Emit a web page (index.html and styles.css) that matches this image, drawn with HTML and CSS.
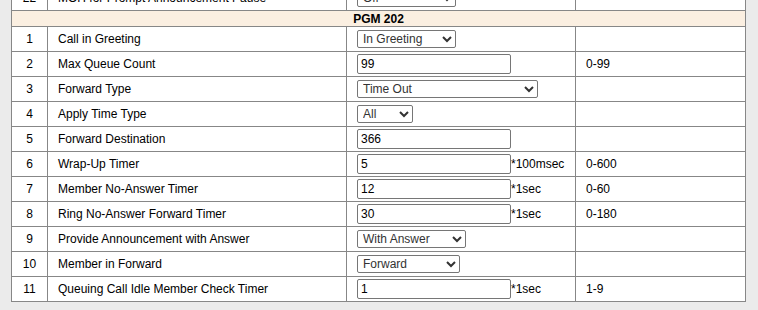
FILE: index.html
```html
<!DOCTYPE html>
<html lang="en">
<head>
  <meta charset="UTF-8">
  <title>PGM Settings</title>
  <link rel="stylesheet" href="styles.css">
</head>
<body>
  <div class="page">
    <table class="settings">
      <colgroup>
        <col class="col-no">
        <col class="col-name">
        <col class="col-value">
        <col class="col-range">
      </colgroup>
      <tr>
        <td class="no">22</td>
        <td>MOH for Prompt Announcement Pause</td>
        <td><select class="sel-off"><option>Off</option></select></td>
        <td></td>
      </tr>
      <tr class="group">
        <td colspan="4">PGM 202</td>
      </tr>
      <tr>
        <td class="no">1</td>
        <td>Call in Greeting</td>
        <td><select class="sel-greeting"><option>In Greeting</option></select></td>
        <td></td>
      </tr>
      <tr>
        <td class="no">2</td>
        <td>Max Queue Count</td>
        <td><input type="text" value="99"></td>
        <td>0-99</td>
      </tr>
      <tr>
        <td class="no">3</td>
        <td>Forward Type</td>
        <td><select class="sel-forward-type"><option>Time Out</option></select></td>
        <td></td>
      </tr>
      <tr>
        <td class="no">4</td>
        <td>Apply Time Type</td>
        <td><select class="sel-time"><option>All</option></select></td>
        <td></td>
      </tr>
      <tr>
        <td class="no">5</td>
        <td>Forward Destination</td>
        <td><input type="text" value="366"></td>
        <td></td>
      </tr>
      <tr>
        <td class="no">6</td>
        <td>Wrap-Up Timer</td>
        <td><input type="text" value="5">*100msec</td>
        <td>0-600</td>
      </tr>
      <tr>
        <td class="no">7</td>
        <td>Member No-Answer Timer</td>
        <td><input type="text" value="12">*1sec</td>
        <td>0-60</td>
      </tr>
      <tr>
        <td class="no">8</td>
        <td>Ring No-Answer Forward Timer</td>
        <td><input type="text" value="30">*1sec</td>
        <td>0-180</td>
      </tr>
      <tr>
        <td class="no">9</td>
        <td>Provide Announcement with Answer</td>
        <td><select class="sel-answer"><option>With Answer</option></select></td>
        <td></td>
      </tr>
      <tr>
        <td class="no">10</td>
        <td>Member in Forward</td>
        <td><select class="sel-member"><option>Forward</option></select></td>
        <td></td>
      </tr>
      <tr>
        <td class="no">11</td>
        <td>Queuing Call Idle Member Check Timer</td>
        <td><input type="text" value="1">*1sec</td>
        <td>1-9</td>
      </tr>
    </table>
  </div>
</body>
</html>
```

FILE: styles.css
```css
* {
  box-sizing: border-box;
}

body {
  margin: 0;
  background: #ebebeb;
  font-family: Arial, "Liberation Sans", sans-serif;
  font-size: 12px;
  color: #000;
}

.page {
  padding: 0 0 0 11px;
  margin-top: -15px;
}

.settings {
  border-collapse: collapse;
  table-layout: fixed;
  width: 734px;
  background: #fff;
  border: 1px solid #878787;
}

.col-no { width: 36px; }
.col-name { width: 299px; }
.col-value { width: 229px; }
.col-range { width: 170px; }

.settings td {
  border: 1px solid #878787;
  height: 25px;
  padding: 0 0 0 10px;
  vertical-align: middle;
  white-space: nowrap;
}

.settings td.no {
  text-align: center;
  padding: 0;
}

.settings tr.group td {
  height: 16px;
  line-height: 14px;
  background: #fbefe1;
  font-weight: bold;
  text-align: center;
  padding: 0;
}

input[type="text"] {
  width: 154px;
  height: 20px;
  margin: 0;
  padding: 1px 3px;
  font: 12px Arial, "Liberation Sans", sans-serif;
  color: #000;
  border: 1px solid #767676;
  border-radius: 2px;
  vertical-align: baseline;
}

select {
  height: 18px;
  margin: 0;
  padding: 0 0 0 1px;
  font: 12px Arial, "Liberation Sans", sans-serif;
  color: #333;
  border: 1px solid #767676;
  border-radius: 2px;
  background: #fff;
  vertical-align: middle;
}

.sel-off { width: 99px; }
.sel-greeting { width: 99px; }
.sel-forward-type { width: 181px; }
.sel-time { width: 56px; }
.sel-answer { width: 109px; }
.sel-member { width: 103px; }
```
